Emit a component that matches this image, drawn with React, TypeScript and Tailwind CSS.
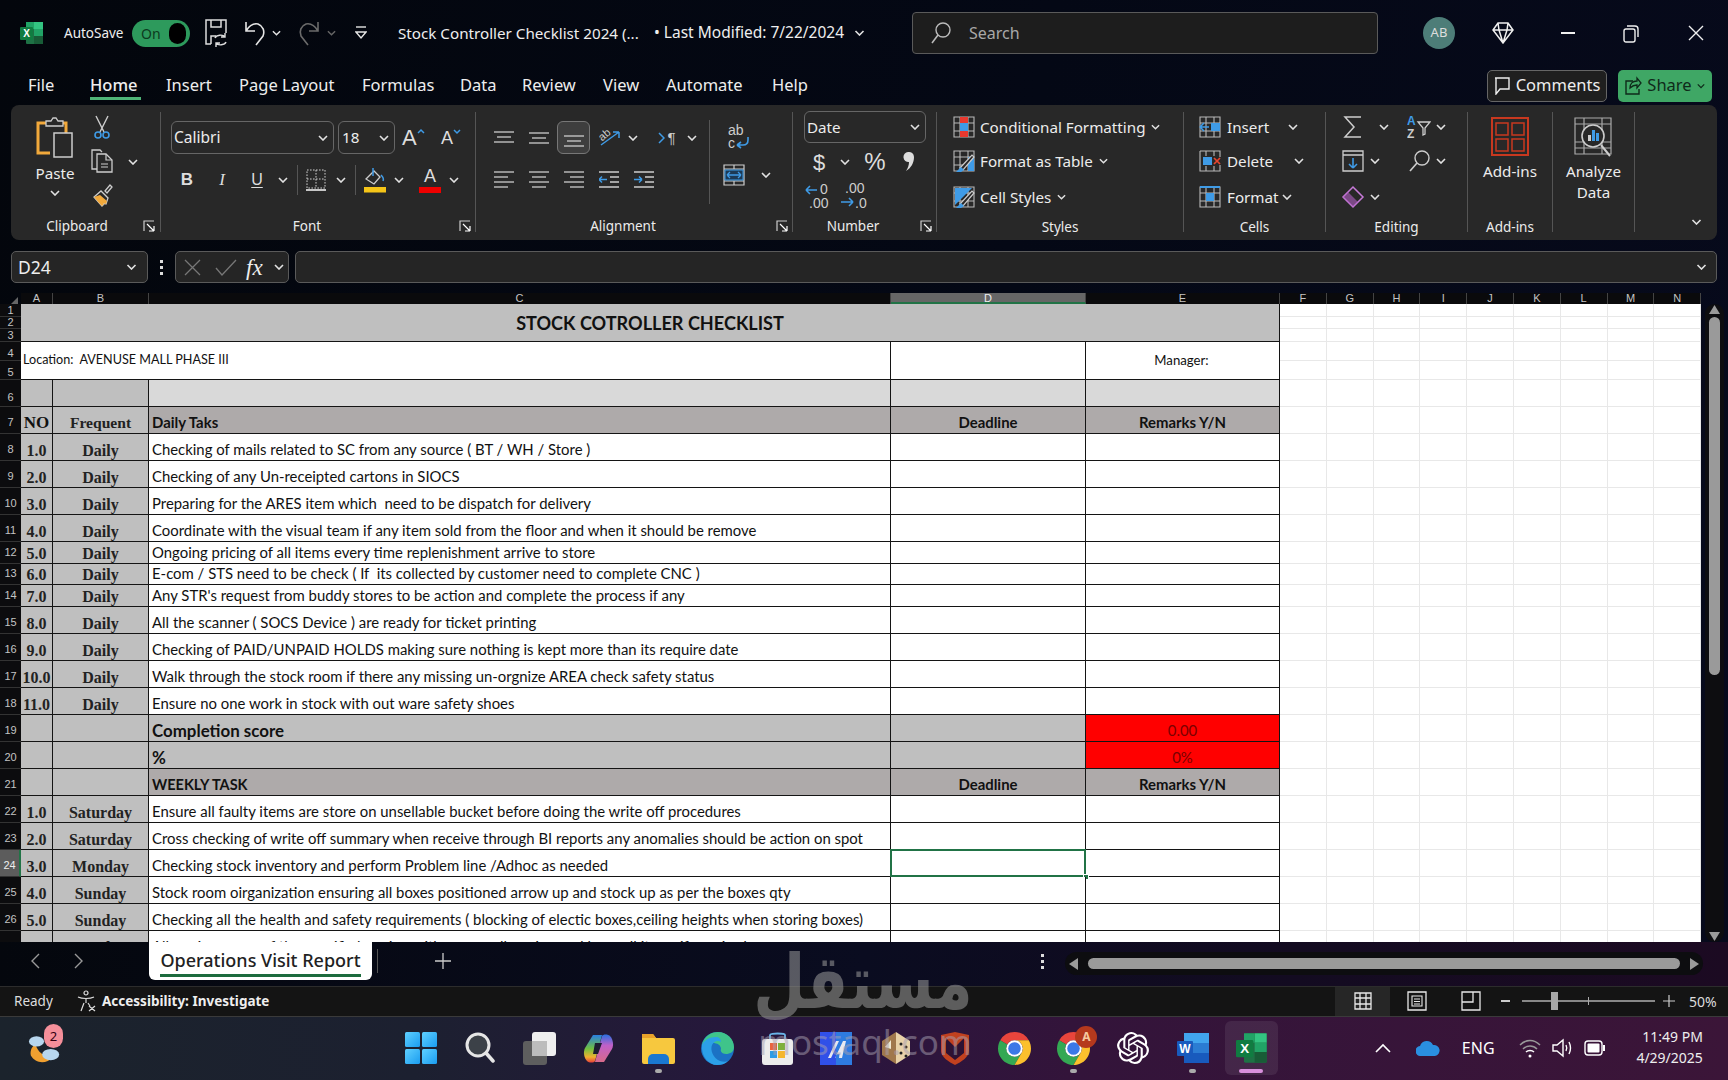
import React from "react";
import { SiOpenai } from "react-icons/si";

const L = "#cdcdcd";
const B = "#3f9be6";

// ─── tiny drawing helpers ────────────────────────────────────────────

function Chev({ c = "#e2e2e2", w = 10 }: { c?: string; w?: number }) {
  return (
    <svg width={w} height={6} viewBox="0 0 10 6" className="shrink-0">
      <path d="M1 1l4 4 4-4" fill="none" stroke={c} strokeWidth="1.6" />
    </svg>
  );
}

function Launcher() {
  return (
    <svg width={12} height={12} viewBox="0 0 12 12" className="shrink-0">
      <path d="M1 11V1h10" fill="none" stroke={L} strokeWidth="1.2" />
      <path d="M11 11V6M11 11H6M11 11L4 4" fill="none" stroke="#fff" strokeWidth="1.2" />
    </svg>
  );
}

function Lines({ rows, w = 20, h = 20 }: { rows: [number, number, number][]; w?: number; h?: number }) {
  return (
    <svg width={w} height={h} viewBox="0 0 20 20">
      {rows.map(([a, b, y], i) => (
        <path key={i} d={`M${a} ${y}H${b}`} stroke={L} strokeWidth="1.3" />
      ))}
    </svg>
  );
}

function Grid22({ children }: { children?: React.ReactNode }) {
  return (
    <svg width={22} height={22} viewBox="0 0 22 22" className="shrink-0">
      <path d="M1 1h20v20H1zM1 7h20M1 15h20M7 1v20M15 1v20" fill="none" stroke="#b8b8b8" strokeWidth="1.1" />
      {children}
    </svg>
  );
}

function XlLogo({ s = 24 }: { s?: number }) {
  return (
    <svg width={s} height={s} viewBox="0 0 24 24" className="shrink-0">
      <rect x="6" y="1" width="17" height="22" rx="1" fill="#1e7145" />
      <rect x="14" y="1" width="9" height="7" fill="#33c481" />
      <rect x="14" y="8" width="9" height="7" fill="#21a366" />
      <rect x="6" y="1" width="8" height="7" fill="#21a366" />
      <rect x="14" y="15" width="9" height="8" fill="#185c37" />
      <rect x="0" y="6" width="13" height="13" rx="1" fill="#107c41" />
      <text x="6.5" y="16" textAnchor="middle" fontSize="10" fontWeight="700" fill="#fff" fontFamily="Liberation Sans, sans-serif">X</text>
    </svg>
  );
}

function WordLogo() {
  return (
    <svg width={32} height={30} viewBox="0 0 32 30">
      <rect x="7" y="0" width="25" height="30" rx="1.5" fill="#2b7cd3" />
      <rect x="7" y="0" width="25" height="10" fill="#41a5ee" />
      <rect x="7" y="20" width="25" height="10" fill="#185abd" />
      <rect x="0" y="8" width="16" height="15" rx="1" fill="#185abd" />
      <text x="8" y="20" textAnchor="middle" fontSize="12" fontWeight="700" fill="#fff" fontFamily="Liberation Sans, sans-serif">W</text>
    </svg>
  );
}

function ChromeLogo() {
  return (
    <svg width={33} height={33} viewBox="4 4 40 40">
      <path d="M24 4A20 20 0 0 1 41.32 14H24A10 10 0 0 0 15.34 19L6.68 14A20 20 0 0 1 24 4Z" fill="#e8453c" />
      <path d="M6.68 14A20 20 0 0 0 24 44L32.66 29A10 10 0 0 1 15.34 19Z" fill="#34a853" />
      <path d="M41.32 14H24A10 10 0 0 1 32.66 29L24 44A20 20 0 0 0 41.32 14Z" fill="#fbc02d" />
      <circle cx="24" cy="24" r="10" fill="#fff" />
      <circle cx="24" cy="24" r="7.6" fill="#3b78e7" />
    </svg>
  );
}

// ─── sheet data ──────────────────────────────────────────────────────

const daily: [number, string, string, string, string][] = [
  [8, "1.0", "Daily", "Checking of mails related to SC from any source ( BT / WH / Store )", ""],
  [9, "2.0", "Daily", "Checking of any Un-receipted cartons in SIOCS", ""],
  [10, "3.0", "Daily", "Preparing for the ARES item which  need to be dispatch for delivery", ""],
  [11, "4.0", "Daily", "Coordinate with the visual team if any item sold from the floor and when it should be remove", ""],
  [12, "5.0", "Daily", "Ongoing pricing of all items every time replenishment arrive to store", ""],
  [13, "6.0", "Daily", "E-com / STS need to be check ( If  its collected by customer need to complete CNC )", ""],
  [14, "7.0", "Daily", "Any STR's request from buddy stores to be action and complete the process if any", ""],
  [15, "8.0", "Daily", "All the scanner ( SOCS Device ) are ready for ticket printing", ""],
  [16, "9.0", "Daily", "Checking of PAID/UNPAID HOLDS making sure nothing is kept more than its require date", ""],
  [17, "10.0", "Daily", "Walk through the stock room if there any missing un-orgnize AREA check safety status", ""],
  [18, "11.0", "Daily", "Ensure no one work in stock with out ware safety shoes", ""],
];

const weekly: [number, string, string, string, string][] = [
  [22, "1.0", "Saturday", "Ensure all faulty items are store on unsellable bucket before doing the write off procedures", ""],
  [23, "2.0", "Saturday", "Cross checking of write off summary when receive through BI reports any anomalies should be action on spot", ""],
  [24, "3.0", "Monday", "Checking stock inventory and perform Problem line /Adhoc as needed", "sel"],
  [25, "4.0", "Sunday", "Stock room oirganization ensuring all boxes positioned arrow up and stock up as per the boxes qty", ""],
  [26, "5.0", "Sunday", "Checking all the health and safety requirements ( blocking of electic boxes,ceiling heights when storing boxes)", ""],
  [27, "6.0", "Sunday", "Allocating space of the specific location with proper allocation and keep all items if required", ""],
];

const blanks = [0, 1, 2, 3, 4, 5, 6, 7, 8];

function Blanks() {
  return (
    <>
      {blanks.map((i) => (
        <div key={i} className="bg-white border-r border-b border-[#e8e8e8]" />
      ))}
    </>
  );
}

function RowNo({ n, active }: { n: number; active?: boolean }) {
  const pad = n <= 3 ? "pb-0" : n <= 5 ? "pb-[1px]" : n === 6 ? "pb-[3px]" : "pb-[5px]";
  return (
    <div className={`flex items-end justify-center ${pad} border-b border-[#333] text-[11px] leading-[11px] overflow-hidden font-['Liberation_Sans',sans-serif] ` + (active ? "bg-[#5c5c5c] text-[#eee] border-r-2 border-r-[#217346]" : "bg-[#0c0c0e] text-[#c4c4c4]")}>
      {n}
    </div>
  );
}

const serifA = "font-['Liberation_Serif',serif] font-bold text-[16px] leading-[19px] text-[#222]";
const serifB = "font-['Liberation_Serif',serif] font-bold text-[16px] leading-[19px] text-[#222]";
const cal = "font-['Lato',sans-serif] text-[#111]";
const cellLine = "border-b border-r border-[#141414]";

function TaskRow({ r }: { r: [number, string, string, string, string] }) {
  return (
    <>
      <RowNo n={r[0]} active={r[4] === "sel"} />
      <div className={`${cellLine} bg-[#bfbfbf] flex items-end justify-center ${serifA}`}>{r[1]}</div>
      <div className={`${cellLine} bg-[#bfbfbf] flex items-end justify-center ${serifB}`}>{r[2]}</div>
      <div className={`${cellLine} bg-white flex items-end pl-[3px] whitespace-pre overflow-hidden text-[14.9px] leading-[21px] ${cal}`}>{r[3]}</div>
      <div className={`${cellLine} bg-white relative`}>
        {r[4] === "sel" && (
          <>
            <div className="absolute -left-px -top-px -right-px -bottom-px border-2 border-[#217346]" />
            <div className="absolute -right-[4px] -bottom-[4px] w-[6px] h-[6px] bg-[#217346] border border-white" />
          </>
        )}
      </div>
      <div className={`${cellLine} bg-white`} />
      <Blanks />
    </>
  );
}

function GrayRow({ n, label, bold, fill, d, e, red }: { n: number; label: string; bold: string; fill: string; d?: string; e?: string; red?: boolean }) {
  return (
    <>
      <RowNo n={n} />
      <div className={`${cellLine} bg-[#bfbfbf]`} />
      <div className={`${cellLine} bg-[#bfbfbf]`} />
      <div className={`${cellLine} ${fill} flex items-end pl-[3px] leading-[21px] ${cal} ${bold}`}>{label}</div>
      <div className={`${cellLine} ${fill} flex items-end justify-center leading-[21px] font-bold text-[14.9px] ${cal}`}>{d}</div>
      <div className={`${cellLine} ${red ? "bg-[#ff0000] text-[#7a0000] font-normal" : fill + " font-bold text-[#111]"} flex items-end justify-center leading-[21px] text-[14.9px] font-['Lato',sans-serif]`}>{e}</div>
      <Blanks />
    </>
  );
}

function Sheet() {
  return (
    <div className="relative w-[1702px] h-[638px] overflow-hidden grid grid-cols-[21px_32px_96px_742px_195px_194px_repeat(9,46.8px)] grid-rows-[12.67px_12.67px_12.66px_19px_19px_27px_27px_27px_27px_27px_27px_22px_21.5px_21.5px_27px_27px_27px_27px_27px_27px_27px_27px_27px_27px_27px_27px_27px]">
      <RowNo n={1} />
      <div className="col-span-5 row-span-3 bg-[#bfbfbf] border-b border-r border-[#141414] flex items-center justify-center font-['Lato',sans-serif] font-bold text-[18.1px] text-[#111] pt-[2px]">STOCK COTROLLER CHECKLIST</div>
      <Blanks />
      <RowNo n={2} />
      <Blanks />
      <RowNo n={3} />
      <Blanks />

      <RowNo n={4} />
      <div className={`col-span-3 row-span-2 border-b border-r border-[#141414] bg-white flex items-center pl-[2px] whitespace-pre text-[12.6px] ${cal}`}>Location:  AVENUSE MALL PHASE III</div>
      <div className={`row-span-2 bg-white ${cellLine}`} />
      <div className={`row-span-2 bg-white ${cellLine} flex items-center justify-center pr-[2px] text-[13.2px] ${cal}`}>Manager:</div>
      <Blanks />
      <RowNo n={5} />
      <Blanks />

      <RowNo n={6} />
      <div className={`${cellLine} bg-[#bfbfbf]`} />
      <div className={`${cellLine} bg-[#bfbfbf]`} />
      <div className={`${cellLine} bg-[#d9d9d9]`} />
      <div className={`${cellLine} bg-[#d9d9d9]`} />
      <div className={`${cellLine} bg-[#d9d9d9]`} />
      <Blanks />

      <RowNo n={7} />
      <div className={`${cellLine} bg-[#bfbfbf] flex items-end justify-center font-['Liberation_Serif',serif] font-bold text-[17px] leading-[20px] text-[#111]`}>NO</div>
      <div className={`${cellLine} bg-[#bfbfbf] flex items-end justify-center font-['Liberation_Serif',serif] font-bold text-[15.6px] leading-[20px] text-[#222]`}>Frequent</div>
      <div className={`${cellLine} bg-[#aeaaaa] flex items-end pl-[3px] leading-[21px] font-bold text-[14.9px] ${cal}`}>Daily Taks</div>
      <div className={`${cellLine} bg-[#aeaaaa] flex items-end justify-center leading-[21px] font-bold text-[14.9px] ${cal}`}>Deadline</div>
      <div className={`${cellLine} bg-[#aeaaaa] flex items-end justify-center leading-[21px] font-bold text-[14.9px] ${cal}`}>Remarks Y/N</div>
      <Blanks />

      {daily.map((r) => (
        <TaskRow key={r[0]} r={r} />
      ))}

      <GrayRow n={19} label="Completion score" bold="font-bold text-[16.9px]" fill="bg-[#bfbfbf]" e="0.00" red />
      <GrayRow n={20} label="%" bold="font-bold text-[16.9px]" fill="bg-[#bfbfbf]" e="0%" red />
      <GrayRow n={21} label="WEEKLY TASK" bold="font-bold text-[14.5px]" fill="bg-[#aeaaaa]" d="Deadline" e="Remarks Y/N" />

      {weekly.map((r) => (
        <TaskRow key={r[0]} r={r} />
      ))}
    </div>
  );
}

// ─── ribbon pieces ───────────────────────────────────────────────────

function Sep() {
  return <div className="w-px h-[120px] mt-[7px] bg-[#555] shrink-0" />;
}

function StyleRow({ icon, label, mt }: { icon: React.ReactNode; label: string; mt: string }) {
  return (
    <div className={`flex items-center h-[28px] ml-[16px] ${mt}`}>
      {icon}
      <span className="ml-[5px] mr-[6px] whitespace-nowrap">{label}</span>
      <Chev w={9} />
    </div>
  );
}

function CellRow({ icon, label, w, mt }: { icon: React.ReactNode; label: string; w: string; mt: string }) {
  return (
    <div className={`flex items-center h-[28px] ml-[15px] ${mt}`}>
      {icon}
      <span className={`ml-[6px] whitespace-nowrap ${w}`}>{label}</span>
      <Chev />
    </div>
  );
}

function Ribbon() {
  return (
    <div className="mx-[11px] h-[135px] rounded-[8px] bg-[#282828] flex text-[#ececec] font-['Noto_Sans',sans-serif] text-[15.2px]">
      {/* Clipboard */}
      <div className="w-[149px] shrink-0 flex flex-col">
        <div className="h-[111px] flex">
          <div className="ml-[14px] w-[60px] pt-[12px] flex flex-col items-center">
            <svg width={38} height={41} viewBox="0 0 38 41" className="shrink-0">
              <path d="M12 6H2v30h12" fill="none" stroke="#f2a93b" strokeWidth="3" />
              <path d="M26 6h4v10" fill="none" stroke="#f2a93b" strokeWidth="3" />
              <path d="M10 9V4h5l2-3h3l2 3h5v5z" fill="#282828" stroke={L} strokeWidth="1.3" />
              <rect x="18" y="16" width="18" height="24" fill="#282828" stroke={L} strokeWidth="1.5" />
            </svg>
            <span className="mt-[4px] h-[22px] leading-[22px]">Paste</span>
            <span className="mt-[6px] leading-none flex"><Chev /></span>
          </div>
          <div className="ml-[5px] w-[24px] pt-[10px] flex flex-col items-center gap-[10px]">
            <svg width={20} height={24} viewBox="0 0 20 24">
              <path d="M4 1l8 16M16 1L8 17" stroke={L} strokeWidth="1.4" fill="none" />
              <circle cx="6" cy="20" r="3" fill="none" stroke={B} strokeWidth="1.6" />
              <circle cx="14" cy="20" r="3" fill="none" stroke={B} strokeWidth="1.6" />
            </svg>
            <svg width={22} height={24} viewBox="0 0 22 24">
              <path d="M6 20H1V1h8l2 2" fill="none" stroke={L} strokeWidth="1.3" />
              <path d="M6 5h9l6 6v12H6z" fill="#282828" stroke={L} strokeWidth="1.3" />
              <path d="M15 5v6h6M10 15h7M10 18h7" fill="none" stroke={L} strokeWidth="1.2" />
            </svg>
            <svg width={22} height={24} viewBox="0 0 22 24">
              <path d="M3 14l8 9 2-2-1-1 3 1 2-6-7-7z" fill="none" stroke={L} strokeWidth="1.3" />
              <path d="M3 14l5 6 3 3 2-2-1-1 3 1 1-3-7-6z" fill="#f2a93b" />
              <path d="M14 8l5-6 2 2-5 6z" fill="none" stroke={L} strokeWidth="1.3" />
            </svg>
          </div>
          <div className="ml-[14px] pt-[54px]"><Chev /></div>
        </div>
        <div className="h-[20px] flex items-center text-[13.5px]">
          <span className="w-[132px] text-center">Clipboard</span>
          <Launcher />
        </div>
      </div>
      <Sep />

      {/* Font */}
      <div className="w-[314px] shrink-0 flex flex-col">
        <div className="h-[111px] pt-[16px]">
          <div className="flex items-center h-[33px]">
            <div className="ml-[10px] w-[163px] h-[33px] rounded-[6px] border border-[#666] flex items-center justify-between pl-[2px] pr-[5px] text-[15.5px]">
              <span>Calibri</span>
              <Chev />
            </div>
            <div className="ml-[4px] w-[57px] h-[33px] rounded-[6px] border border-[#666] flex items-center justify-between pl-[3px] pr-[5px]">
              <span>18</span>
              <Chev />
            </div>
            <div className="ml-[7px] w-[24px] flex items-start">
              <span className="text-[22px] leading-none font-['Liberation_Sans',sans-serif] text-[#ddd]">A</span>
              <svg width={8} height={6} viewBox="0 0 8 6" className="shrink-0 mt-[1px]"><path d="M1 5l3-3 3 3" fill="none" stroke={B} strokeWidth="1.5" /></svg>
            </div>
            <div className="ml-[15px] w-[20px] flex items-start">
              <span className="text-[18px] leading-none font-['Liberation_Sans',sans-serif] text-[#ddd]">A</span>
              <svg width={8} height={6} viewBox="0 0 8 6" className="shrink-0"><path d="M1 1l3 3 3-3" fill="none" stroke={B} strokeWidth="1.5" /></svg>
            </div>
          </div>
          <div className="flex items-center h-[24px] mt-[14px] font-['Liberation_Sans',sans-serif]">
            <span className="ml-[16px] w-[20px] text-center font-bold text-[17px] text-[#ddd]">B</span>
            <span className="ml-[15px] w-[20px] text-center italic font-['Liberation_Serif',serif] text-[17px] text-[#ddd]">I</span>
            <span className="ml-[15px] w-[20px] text-center underline underline-offset-2 text-[16px] text-[#ddd]">U</span>
            <span className="ml-[11px] flex"><Chev /></span>
            <div className="ml-[9px] w-px h-[30px] bg-[#555]" />
            <span className="ml-[6px] flex">
              <svg width={24} height={24} viewBox="0 0 24 24">
                <path d="M3 2h18v18H3zM12 2v18M3 11h18" fill="none" stroke={L} strokeWidth="1" strokeDasharray="1.6 1.4" />
                <path d="M2 22h20" stroke="#eee" strokeWidth="1.6" />
              </svg>
            </span>
            <span className="ml-[8px] flex"><Chev /></span>
            <div className="ml-[9px] w-px h-[30px] bg-[#555]" />
            <span className="ml-[7px] flex">
              <svg width={24} height={26} viewBox="0 0 24 26">
                <path d="M3 12l8-8 6 6-6 7z" fill="none" stroke={L} strokeWidth="1.3" />
                <path d="M10 1v8M18 8c2 2 3 4 2 6" fill="none" stroke={B} strokeWidth="1.5" />
                <rect x="1" y="20" width="22" height="5.5" fill="#f5c518" />
              </svg>
            </span>
            <span className="ml-[7px] flex"><Chev /></span>
            <span className="ml-[14px] w-[24px] flex flex-col items-center leading-none">
              <span className="text-[18px] text-[#ddd] h-[20px]">A</span>
              <span className="w-[22px] h-[5.5px] bg-[#ee0000]" />
            </span>
            <span className="ml-[7px] flex"><Chev /></span>
          </div>
        </div>
        <div className="h-[20px] flex items-center text-[13.5px]">
          <span className="w-[292px] text-center">Font</span>
          <span className="ml-[6px] flex"><Launcher /></span>
        </div>
      </div>
      <Sep />

      {/* Alignment */}
      <div className="w-[316px] shrink-0 flex flex-col">
        <div className="h-[111px] flex">
          <div className="w-[233px] pt-[16px] pl-[11px]">
            <div className="flex items-center h-[33px] gap-[2px]">
              <div className="w-[33px] h-[33px] flex items-center justify-center"><Lines rows={[[0, 20, 4], [3, 17, 9], [0, 20, 14]]} /></div>
              <div className="w-[33px] h-[33px] flex items-center justify-center"><Lines rows={[[0, 20, 5], [3, 17, 10], [0, 20, 15]]} /></div>
              <div className="w-[33px] h-[33px] rounded-[6px] border border-[#777] bg-[#3e3e3e] flex items-center justify-center"><Lines rows={[[0, 20, 8], [3, 17, 13], [0, 20, 18]]} /></div>
              <span className="ml-[6px] flex">
                <svg width={24} height={24} viewBox="0 0 24 24">
                  <path d="M3 16L21 3M21 3h-6M21 3v6" transform="translate(0 3)" fill="none" stroke={B} strokeWidth="1.5" />
                  <text x="1" y="13" fontSize="11" fill={L} transform="rotate(-40 6 10)" fontFamily="Liberation Sans, sans-serif">ab</text>
                </svg>
              </span>
              <span className="ml-[4px] flex"><Chev /></span>
              <span className="ml-[13px] w-[28px] flex items-center justify-center gap-[2px]">
                <svg width={7} height={12} viewBox="0 0 7 12"><path d="M1 1l5 5-5 5" fill="none" stroke={B} strokeWidth="1.5" /></svg>
                <span className="text-[15px] font-['Liberation_Sans',sans-serif] text-[#ccc] leading-none">¶</span>
              </span>
              <span className="ml-[4px] flex"><Chev /></span>
            </div>
            <div className="flex items-center h-[24px] mt-[14px] gap-[2px]">
              <div className="w-[33px] flex justify-center"><Lines rows={[[0, 20, 2], [0, 14, 7], [0, 20, 12], [0, 14, 17]]} /></div>
              <div className="w-[33px] flex justify-center"><Lines rows={[[0, 20, 2], [3, 17, 7], [0, 20, 12], [3, 17, 17]]} /></div>
              <div className="w-[33px] flex justify-center"><Lines rows={[[0, 20, 2], [6, 20, 7], [0, 20, 12], [6, 20, 17]]} /></div>
              <div className="w-[33px] flex justify-center">
                <svg width={20} height={20} viewBox="0 0 20 20">
                  <path d="M0 2h20M11 7h9M11 12h9M0 17h20" stroke={L} strokeWidth="1.3" />
                  <path d="M0 9.5h8M0 9.5l3-3M0 9.5l3 3" fill="none" stroke={B} strokeWidth="1.5" />
                </svg>
              </div>
              <div className="w-[33px] flex justify-center">
                <svg width={20} height={20} viewBox="0 0 20 20">
                  <path d="M0 2h20M11 7h9M11 12h9M0 17h20" stroke={L} strokeWidth="1.3" />
                  <path d="M0 9.5h8M8 9.5l-3-3M8 9.5l-3 3" fill="none" stroke={B} strokeWidth="1.5" />
                </svg>
              </div>
            </div>
          </div>
          <div className="w-px h-[84px] mt-[15px] bg-[#555]" />
          <div className="ml-[12px] pt-[18px] flex flex-col">
            <svg width={30} height={30} viewBox="0 0 30 30">
              <text x="6" y="12" fontSize="14" fill={L} fontFamily="Liberation Sans, sans-serif">ab</text>
              <text x="6" y="25" fontSize="14" fill={L} fontFamily="Liberation Sans, sans-serif">c</text>
              <path d="M26 14v3c0 4-2 5-5 5h-6M15 22l4-3M15 22l4 3" fill="none" stroke={B} strokeWidth="1.6" />
            </svg>
            <div className="mt-[11px] flex items-center ml-[1px]">
              <svg width={22} height={22} viewBox="0 0 22 22">
                <path d="M1 1h20v20H1zM1 5h20M1 17h20M11 1v4M11 17v4" fill="none" stroke={L} strokeWidth="1.2" />
                <rect x="2" y="6" width="18" height="10" fill="#1d3a55" stroke={B} strokeWidth="1" />
                <path d="M4 11h14M4 11l3-3M4 11l3 3M18 11l-3-3M18 11l-3 3" fill="none" stroke={B} strokeWidth="1.3" />
              </svg>
              <span className="ml-[16px] flex"><Chev /></span>
            </div>
          </div>
        </div>
        <div className="h-[20px] flex items-center text-[13.5px]">
          <span className="w-[294px] text-center">Alignment</span>
          <span className="ml-[6px] flex"><Launcher /></span>
        </div>
      </div>
      <Sep />

      {/* Number */}
      <div className="w-[143px] shrink-0 flex flex-col">
        <div className="h-[111px] pt-[6px]">
          <div className="ml-[11px] w-[122px] h-[32px] rounded-[6px] border border-[#666] flex items-center justify-between pl-[2px] pr-[5px]">
            <span>Date</span>
            <Chev />
          </div>
          <div className="flex items-center h-[24px] mt-[7px] text-[#ddd] font-['Liberation_Sans',sans-serif]">
            <span className="ml-[16px] w-[20px] text-center text-[22px]">$</span>
            <span className="ml-[11px] flex"><Chev /></span>
            <span className="ml-[11px] w-[28px] text-center text-[24px]">%</span>
            <span className="ml-[14px] flex">
              <svg width={16} height={22} viewBox="0 0 16 22">
                <path d="M5 1a5 5 0 0 1 6 5c0 6-3 11-8 14 2-3 3-6 3-9a5 5 0 0 1-1-10z" fill="#ddd" />
              </svg>
            </span>
          </div>
          <div className="flex items-center h-[24px] mt-[10px] font-['Liberation_Sans',sans-serif]">
            <span className="ml-[12px] flex">
              <svg width={28} height={30} viewBox="0 0 28 30">
                <path d="M1 9h11M1 9l4-4M1 9l4 4" fill="none" stroke={B} strokeWidth="1.6" />
                <text x="15" y="13" fontSize="14" fill={L} fontFamily="Liberation Sans, sans-serif">0</text>
                <text x="4" y="27" fontSize="14" fill={L} fontFamily="Liberation Sans, sans-serif">.00</text>
              </svg>
            </span>
            <span className="ml-[7px] flex">
              <svg width={28} height={30} viewBox="0 0 28 30">
                <text x="5" y="12" fontSize="14" fill={L} fontFamily="Liberation Sans, sans-serif">.00</text>
                <path d="M1 21h12M13 21l-4-4M13 21l-4 4" fill="none" stroke={B} strokeWidth="1.6" />
                <text x="15" y="27" fontSize="14" fill={L} fontFamily="Liberation Sans, sans-serif">.0</text>
              </svg>
            </span>
          </div>
        </div>
        <div className="h-[20px] flex items-center text-[13.5px]">
          <span className="w-[120px] text-center">Number</span>
          <span className="ml-[7px] flex"><Launcher /></span>
        </div>
      </div>
      <Sep />

      {/* Styles */}
      <div className="w-[246px] shrink-0 flex flex-col">
        <div className="h-[112px] pt-[8px]">
          <StyleRow
            mt=""
            label="Conditional Formatting"
            icon={
              <Grid22>
                <rect x="7" y="1" width="8" height="6" fill="#e8392f" />
                <rect x="7" y="7" width="8" height="8" fill={B} />
                <rect x="7" y="15" width="8" height="6" fill="#e8392f" />
              </Grid22>
            }
          />
          <StyleRow
            mt="mt-[6px]"
            label="Format as Table"
            icon={
              <Grid22>
                <path d="M15 7h6v14h-6z" fill={B} />
                <path d="M7 18L19 5l2 2L10 20z" fill="#282828" stroke={L} strokeWidth="1.2" />
                <path d="M3 22l5-5 3 3-3 2z" fill={B} />
              </Grid22>
            }
          />
          <StyleRow
            mt="mt-[8px]"
            label="Cell Styles"
            icon={
              <Grid22>
                <path d="M2 2h17L2 19z" fill={B} />
                <path d="M7 18L19 5l2 2L10 20z" fill="#282828" stroke={L} strokeWidth="1.2" />
                <path d="M3 22l5-5 3 3-3 2z" fill={B} />
              </Grid22>
            }
          />
        </div>
        <div className="h-[20px] flex items-center justify-center text-[13.5px]">Styles</div>
      </div>
      <Sep />

      {/* Cells */}
      <div className="w-[141px] shrink-0 flex flex-col">
        <div className="h-[112px] pt-[8px]">
          <CellRow
            mt=""
            label="Insert"
            w="w-[61px]"
            icon={
              <Grid22>
                <rect x="12" y="7" width="9" height="8" fill={B} />
                <path d="M10 11H1M1 11l4-4M1 11l4 4" fill="none" stroke={B} strokeWidth="1.6" />
              </Grid22>
            }
          />
          <CellRow
            mt="mt-[6px]"
            label="Delete"
            w="w-[67px]"
            icon={
              <svg width={22} height={22} viewBox="0 0 22 22" className="shrink-0">
                <path d="M1 1h20v6M1 1v20h20v-6M7 1v5M15 1v5M7 16v5M15 16v5" fill="none" stroke="#b8b8b8" strokeWidth="1.1" />
                <rect x="4" y="7" width="9" height="8" fill={B} />
                <path d="M15 8l6 6M21 8l-6 6" stroke="#e8452f" strokeWidth="1.7" />
              </svg>
            }
          />
          <CellRow
            mt="mt-[8px]"
            label="Format"
            w="w-[55px]"
            icon={
              <Grid22>
                <path d="M1 1h20" stroke={B} strokeWidth="2" />
                <rect x="7" y="7" width="8" height="8" fill={B} />
              </Grid22>
            }
          />
        </div>
        <div className="h-[20px] flex items-center justify-center text-[13.5px]">Cells</div>
      </div>
      <Sep />

      {/* Editing */}
      <div className="w-[141px] shrink-0 flex flex-col">
        <div className="h-[112px] pt-[8px]">
          <div className="flex items-center h-[28px] ml-[15px]">
            <svg width={24} height={24} viewBox="0 0 24 24">
              <path d="M20 2H4l9 10-9 10h16" fill="none" stroke={L} strokeWidth="1.5" />
            </svg>
            <span className="ml-[14px] flex"><Chev /></span>
            <span className="ml-[18px] flex">
              <svg width={24} height={26} viewBox="0 0 24 26">
                <text x="0" y="11" fontSize="12" fontWeight="700" fill={B} fontFamily="Liberation Sans, sans-serif">A</text>
                <text x="0" y="24" fontSize="12" fontWeight="700" fill={L} fontFamily="Liberation Sans, sans-serif">Z</text>
                <path d="M11 8h12l-5 6v6l-2 1v-7z" fill="none" stroke={L} strokeWidth="1.3" />
              </svg>
            </span>
            <span className="ml-[5px] flex"><Chev /></span>
          </div>
          <div className="flex items-center h-[28px] ml-[15px] mt-[6px]">
            <svg width={24} height={24} viewBox="0 0 24 24">
              <path d="M2 2h20v20H2zM2 6h20" fill="none" stroke={L} strokeWidth="1.3" />
              <path d="M12 9v10M12 19l-4-4M12 19l4-4" fill="none" stroke={B} strokeWidth="1.6" />
            </svg>
            <span className="ml-[5px] flex"><Chev /></span>
            <span className="ml-[27px] flex">
              <svg width={24} height={24} viewBox="0 0 24 24">
                <circle cx="15" cy="9" r="7" fill="none" stroke={L} strokeWidth="1.4" />
                <path d="M10 14l-7 8" stroke={L} strokeWidth="1.6" />
              </svg>
            </span>
            <span className="ml-[5px] flex"><Chev /></span>
          </div>
          <div className="flex items-center h-[28px] ml-[15px] mt-[8px]">
            <svg width={24} height={24} viewBox="0 0 24 24">
              <path d="M12 2l10 10-10 10L2 12z" fill="#282828" stroke="#c77ad8" strokeWidth="1.5" />
              <path d="M2 12l5-5 10 10-5 5z" fill="#b35fc4" fillOpacity=".6" />
            </svg>
            <span className="ml-[5px] flex"><Chev /></span>
          </div>
        </div>
        <div className="h-[20px] flex items-center justify-center text-[13.5px]">Editing</div>
      </div>
      <Sep />

      {/* Add-ins */}
      <div className="w-[84px] shrink-0 flex flex-col items-center">
        <div className="h-[112px] pt-[12px] flex flex-col items-center">
          <svg width={38} height={39} viewBox="0 0 38 39" className="shrink-0">
            <rect x="1" y="1" width="36" height="37" fill="none" stroke="#c8381f" strokeWidth="2" />
            <rect x="5" y="6" width="12" height="12" fill="none" stroke="#c8381f" strokeWidth="1.5" />
            <rect x="21" y="6" width="12" height="12" fill="none" stroke="#c8381f" strokeWidth="1.5" />
            <rect x="5" y="22" width="12" height="12" fill="none" stroke="#c8381f" strokeWidth="1.5" />
            <rect x="21" y="22" width="12" height="12" fill="none" stroke="#c8381f" strokeWidth="1.5" />
          </svg>
          <span className="mt-[4px]">Add-ins</span>
        </div>
        <div className="h-[20px] flex items-center text-[13.5px]">Add-ins</div>
      </div>
      <Sep />

      {/* Analyze */}
      <div className="w-[81px] shrink-0 flex flex-col items-center">
        <div className="h-[112px] pt-[12px] flex flex-col items-center">
          <svg width={38} height={40} viewBox="0 0 38 40" className="shrink-0">
            <path d="M1 1h36v36H1zM1 7h36M1 25h36M1 31h36M10 1v36M28 1v36" fill="none" stroke="#a9a9a9" strokeWidth="1.2" />
            <circle cx="19" cy="19" r="11" fill="#282828" stroke={L} strokeWidth="1.6" />
            <rect x="14" y="18" width="3" height="6" fill={L} />
            <rect x="18" y="13" width="3" height="11" fill={B} />
            <rect x="22" y="16" width="3" height="8" fill={B} />
            <path d="M27 28l9 11" stroke={L} strokeWidth="2" />
          </svg>
          <span className="mt-[4px] leading-[21px]">Analyze</span>
          <span className="leading-[21px]">Data</span>
        </div>
      </div>
      <Sep />
      <div className="flex-1 flex items-end justify-end pr-[14px] pb-[15px]"><Chev w={13} /></div>
    </div>
  );
}

// ─── top bars ────────────────────────────────────────────────────────

function TitleBar() {
  return (
    <div className="h-[66px] flex items-center pl-[20px] text-[#eee] font-['Noto_Sans',sans-serif]">
      <XlLogo />
      <span className="ml-[20px] w-[68px] text-[13.5px]">AutoSave</span>
      <div className="w-[58px] h-[27px] rounded-full bg-[#2d9a5c] flex items-center pl-[9px] text-[14px] text-[#0c3a20]">
        <span className="w-[28px]">On</span>
        <span className="w-[17px] h-[21px] rounded-full bg-black" />
      </div>
      <span className="ml-[15px] flex">
        <svg width={23} height={28} viewBox="0 0 23 28">
          <path d="M6 25H1V1h20v13M6 1v7h10V1M6 25v-8h5" fill="none" stroke="#ddd" strokeWidth="1.5" />
          <path d="M10 19c1-3 8-4 10-1M21 23c-1 3-8 4-10 1M20 14v4h-4M11 28v-4h4" fill="none" stroke="#ddd" strokeWidth="1.4" />
        </svg>
      </span>
      <span className="ml-[17px] flex">
        <svg width={21} height={26} viewBox="0 0 21 26">
          <path d="M1 2v9h9M1 11c3-5 7-8 12-7 5 2 7 7 5 12l-7 9" fill="none" stroke="#e5e5e5" strokeWidth="1.6" />
        </svg>
      </span>
      <span className="ml-[6px] flex"><Chev w={9} /></span>
      <span className="ml-[16px] flex">
        <svg width={23} height={26} viewBox="0 0 21 26">
          <path d="M20 2v9h-9M20 11c-3-5-7-8-12-7-5 2-7 7-5 12l7 9" fill="none" stroke="#6b6b6b" strokeWidth="1.6" />
        </svg>
      </span>
      <span className="ml-[7px] flex"><Chev c="#666" w={9} /></span>
      <span className="ml-[19px] flex">
        <svg width={12} height={14} viewBox="0 0 12 14">
          <path d="M1 1h10" stroke="#e5e5e5" strokeWidth="1.4" />
          <path d="M1 6h10L6 12z" fill="none" stroke="#e5e5e5" strokeWidth="1.4" />
        </svg>
      </span>
      <span className="ml-[31px] w-[256px] text-[15.2px] whitespace-nowrap">Stock Controller Checklist 2024 (...</span>
      <span className="text-[15.5px] whitespace-nowrap w-[200px]">• Last Modified: 7/22/2024</span>
      <Chev w={11} />
      <div className="ml-[47px] w-[466px] h-[42px] rounded-[4px] border border-[#5a5a5a] bg-[#1d1d1d] flex items-center pl-[17px] text-[16px] text-[#a8a8a8]">
        <svg width={22} height={24} viewBox="0 0 22 24">
          <circle cx="13" cy="9" r="7" fill="none" stroke="#bbb" strokeWidth="1.4" />
          <path d="M8 14l-6 8" stroke="#bbb" strokeWidth="1.5" />
        </svg>
        <span className="ml-[17px]">Search</span>
      </div>
      <div className="ml-[45px] w-[32px] h-[32px] rounded-full bg-[#4d7d78] flex items-center justify-center text-[13px] text-[#ddd]">AB</div>
      <span className="ml-[37px] flex">
        <svg width={22} height={22} viewBox="0 0 22 22">
          <path d="M6 1h10l5 7-10 13L1 8zM1 8h20M7 8l4 13 4-13M6 1l1 7M16 1l-1 7" fill="none" stroke="#f0f0f0" strokeWidth="1.5" />
        </svg>
      </span>
      <span className="ml-[47px] w-[14px] h-[2px] bg-[#f0f0f0]" />
      <span className="ml-[48px] flex">
        <svg width={16} height={20} viewBox="0 0 16 20">
          <path d="M4 3h8a3 3 0 0 1 3 3v8" fill="none" stroke="#f0f0f0" strokeWidth="1.4" />
          <rect x="1" y="6" width="11" height="13" rx="2" fill="none" stroke="#f0f0f0" strokeWidth="1.4" />
        </svg>
      </span>
      <span className="ml-[49px] flex">
        <svg width={16} height={16} viewBox="0 0 16 16">
          <path d="M1 1l14 14M15 1L1 15" stroke="#f0f0f0" strokeWidth="1.4" />
        </svg>
      </span>
    </div>
  );
}

function TabRow() {
  return (
    <div className="h-[39px] flex items-center pl-[28px] text-[16.5px] text-[#eee] font-['Noto_Sans',sans-serif]">
      <span className="w-[62px]">File</span>
      <span className="w-[76px] relative font-medium">
        Home
        <span className="absolute left-0 w-[51px] top-[24px] h-[3px] bg-[#4fb477]" />
      </span>
      <span className="w-[73px]">Insert</span>
      <span className="w-[123px]">Page Layout</span>
      <span className="w-[98px]">Formulas</span>
      <span className="w-[62px]">Data</span>
      <span className="w-[81px]">Review</span>
      <span className="w-[63px]">View</span>
      <span className="w-[106px]">Automate</span>
      <span className="w-[715px]">Help</span>
      <div className="w-[120px] h-[32px] rounded-[5px] border border-[#666] bg-[#1f1f1f] flex items-center justify-center gap-[6px]">
        <svg width={16} height={18} viewBox="0 0 16 18">
          <path d="M1 1h14v11H6l-4 5V1z" fill="none" stroke="#eee" strokeWidth="1.4" />
        </svg>
        Comments
      </div>
      <div className="ml-[11px] w-[94px] h-[32px] rounded-[5px] bg-[#3fa765] flex items-center justify-center gap-[5px] text-[#0f2a1a]">
        <svg width={17} height={19} viewBox="0 0 17 19">
          <path d="M8 5H1v13h13v-5" fill="none" stroke="#0f2a1a" strokeWidth="1.4" />
          <path d="M5 12c0-5 3-7 7-7V2l4 5-4 5V9c-3 0-5 1-7 3z" fill="none" stroke="#0f2a1a" strokeWidth="1.3" />
        </svg>
        Share
        <Chev c="#0f2a1a" w={8} />
      </div>
    </div>
  );
}

function FormulaBar() {
  return (
    <div className="mt-[11px] h-[32px] mx-[11px] flex items-center text-[#eee] font-['Noto_Sans',sans-serif]">
      <div className="w-[137px] h-full rounded-[5px] border border-[#5a5a5a] bg-[#252525] flex items-center justify-between pl-[6px] pr-[9px] text-[17.5px]">
        <span>D24</span>
        <Chev w={13} />
      </div>
      <div className="w-[27px] flex flex-col items-center gap-[3px]">
        <span className="w-[3px] h-[3px] bg-[#ddd]" />
        <span className="w-[3px] h-[3px] bg-[#ddd]" />
        <span className="w-[3px] h-[3px] bg-[#ddd]" />
      </div>
      <div className="w-[114px] h-full rounded-[5px] border border-[#5a5a5a] bg-[#252525] flex items-center pl-[8px]">
        <svg width={17} height={17} viewBox="0 0 17 17"><path d="M1 1l15 15M16 1L1 16" stroke="#777" strokeWidth="1.3" /></svg>
        <svg width={22} height={17} viewBox="0 0 22 17" className="ml-[14px]"><path d="M1 9l6 7L21 1" fill="none" stroke="#777" strokeWidth="1.3" /></svg>
        <span className="ml-[9px] w-[24px] text-[23px] italic font-['Liberation_Serif',serif] leading-none">fx</span>
        <span className="ml-[3px] flex"><Chev w={12} /></span>
      </div>
      <div className="ml-[6px] flex-1 h-full rounded-[5px] border border-[#5a5a5a] bg-[#252525] flex items-center justify-end pr-[8px]">
        <Chev w={13} />
      </div>
    </div>
  );
}

const colHeads: [string, string][] = [
  ["A", "w-[32px]"],
  ["B", "w-[96px]"],
  ["C", "w-[742px]"],
  ["D", "w-[195px]"],
  ["E", "w-[194px]"],
  ["F", "w-[46.8px]"],
  ["G", "w-[46.8px]"],
  ["H", "w-[46.8px]"],
  ["I", "w-[46.8px]"],
  ["J", "w-[46.8px]"],
  ["K", "w-[46.8px]"],
  ["L", "w-[46.8px]"],
  ["M", "w-[46.8px]"],
  ["N", "w-[46.8px]"],
];

function ColHeader() {
  return (
    <div className="mt-[10px] h-[11px] flex text-[11px] leading-[11px] text-[#c4c4c4] font-['Liberation_Sans',sans-serif]">
      <div className="w-[21px] flex items-end justify-end pr-[3px]">
        <svg width={7} height={7} viewBox="0 0 7 7"><path d="M7 0v7H0z" fill="#666" /></svg>
      </div>
      {colHeads.map(([c, w]) => (
        <div key={c} className={`${w} shrink-0 text-center border-r border-[#444] ${c === "D" ? "bg-[#666] text-[#eee] border-b-2 border-b-[#217346]" : "bg-[#0a0a0c]"}`}>{c}</div>
      ))}
    </div>
  );
}

function VScroll() {
  return (
    <div className="ml-[3px] w-[19px] h-[638px] rounded-full bg-[#0d0d10] flex flex-col items-center py-[1px]">
      <svg width={11} height={9} viewBox="0 0 11 9"><path d="M5.5 0L11 9H0z" fill="#9a9a9a" /></svg>
      <div className="mt-[3px] w-[11px] h-[358px] rounded-full bg-[#9a9a9a]" />
      <div className="flex-1" />
      <svg width={11} height={9} viewBox="0 0 11 9"><path d="M5.5 9L11 0H0z" fill="#9a9a9a" /></svg>
    </div>
  );
}

function SheetTabs() {
  return (
    <div className="h-[43.5px] flex items-start text-[#ddd]">
      <div className="w-[149px] h-[38px] flex items-center pl-[30px] gap-[34px]">
        <svg width={10} height={16} viewBox="0 0 10 16"><path d="M9 1L2 8l7 7" fill="none" stroke="#999" strokeWidth="1.4" /></svg>
        <svg width={10} height={16} viewBox="0 0 10 16"><path d="M1 1l7 7-7 7" fill="none" stroke="#999" strokeWidth="1.4" /></svg>
      </div>
      <div className="w-[223px] h-[38px] rounded-b-[6px] bg-white flex flex-col items-center justify-start pt-[5px] font-['Noto_Sans',sans-serif] text-[18px] font-medium text-[#222]">
        <span className="leading-[26px] whitespace-nowrap">Operations Visit Report</span>
        <span className="w-[201px] h-[2.5px] mt-[1px] bg-[#1d6b3e]" />
      </div>
      <div className="ml-[5px] mt-[7px] w-px h-[24px] bg-[#555]" />
      <svg width={16} height={16} viewBox="0 0 16 16" className="ml-[57px] mt-[11px]"><path d="M8 0v16M0 8h16" stroke="#ccc" strokeWidth="1.3" /></svg>
      <div className="ml-[590px] mt-[12px] flex flex-col gap-[3px] w-[4px]">
        <span className="w-[3px] h-[3px] bg-[#ddd]" />
        <span className="w-[3px] h-[3px] bg-[#ddd]" />
        <span className="w-[3px] h-[3px] bg-[#ddd]" />
      </div>
      <div className="ml-[20px] mt-[10px] w-[638px] h-[23px] rounded-full bg-[#0d0d10] flex items-center justify-between px-[4px]">
        <svg width={9} height={12} viewBox="0 0 9 12"><path d="M0 6l9-6v12z" fill="#9a9a9a" /></svg>
        <div className="w-[592px] h-[11px] rounded-full bg-[#9a9a9a]" />
        <svg width={9} height={12} viewBox="0 0 9 12"><path d="M9 6L0 0v12z" fill="#9a9a9a" /></svg>
      </div>
    </div>
  );
}

function StatusBar() {
  return (
    <div className="h-[30px] bg-[#141414] border-t border-[#2c2c2c] flex items-center text-[#ddd] font-['Noto_Sans',sans-serif] text-[13.5px]">
      <span className="ml-[14px] w-[63px]">Ready</span>
      <svg width={20} height={22} viewBox="0 0 20 22">
        <circle cx="9" cy="3" r="2" fill="none" stroke="#ddd" strokeWidth="1.2" />
        <path d="M1 7c4 2 12 2 16 0M9 8v5M7 13l-3 8M11 13l2 3M12 16l6 5M18 16l-6 5" fill="none" stroke="#ddd" strokeWidth="1.2" />
      </svg>
      <span className="ml-[5px] w-[1233px] font-bold text-[#eee]">Accessibility: Investigate</span>
      <div className="w-[55px] h-full bg-[#262626] flex items-center justify-center">
        <svg width={18} height={18} viewBox="0 0 18 18"><path d="M1 1h16v16H1zM1 6h16M1 12h16M6 1v16M12 1v16" fill="none" stroke="#e8e8e8" strokeWidth="1.3" /></svg>
      </div>
      <span className="ml-[17px] flex">
        <svg width={20} height={20} viewBox="0 0 20 20"><path d="M1 1h18v18H1z" fill="none" stroke="#e8e8e8" strokeWidth="1.3" /><path d="M5 5h10v10H5zM7 8h6M7 10.5h6M7 13h6" fill="none" stroke="#e8e8e8" strokeWidth="1.1" /></svg>
      </span>
      <span className="ml-[34px] flex">
        <svg width={20} height={20} viewBox="0 0 20 20"><path d="M1 1h18v18H1zM1 11h11V1" fill="none" stroke="#e8e8e8" strokeWidth="1.3" /></svg>
      </span>
      <span className="ml-[20px] w-[9px] h-[1.5px] bg-[#ccc]" />
      <div className="ml-[12px] w-[133px] h-[16px] flex items-center relative">
        <div className="w-full h-[2px] bg-[#888]" />
        <span className="absolute left-[29px] top-[-1px] w-[7px] h-[18px] bg-[#a8a8a8]" />
        <span className="absolute left-[66px] top-[4px] w-px h-[8px] bg-[#aaa]" />
      </div>
      <svg width={12} height={12} viewBox="0 0 12 12" className="ml-[8px]"><path d="M6 0v12M0 6h12" stroke="#ccc" strokeWidth="1.2" /></svg>
      <span className="ml-[14px] text-[14px]">50%</span>
    </div>
  );
}

function TaskIcon({ children, dot, on }: { children: React.ReactNode; dot?: boolean; on?: boolean }) {
  return (
    <div className="relative w-[59.4px] h-full flex items-center justify-center">
      {on && <span className="absolute left-[3px] top-[4px] w-[53px] h-[54px] rounded-[6px] bg-[#ffffff14]" />}
      <span className="relative flex">{children}</span>
      {dot && <span className="absolute left-[26px] bottom-[7px] w-[7px] h-[4px] rounded-full bg-[#aaa]" />}
      {on && <span className="absolute left-[17px] bottom-[7px] w-[24px] h-[4px] rounded-full bg-[#d88fdc]" />}
    </div>
  );
}

function TaskBar() {
  return (
    <div className="h-[64.5px] bg-[linear-gradient(90deg,#1b232c_0%,#1c2030_24%,#28163e_46%,#33143a_62%,#3b1538_100%)] border-t border-[#3a3a3a] flex items-center text-white font-['Noto_Sans',sans-serif]">
      <div className="w-[391px] h-full flex items-center pl-[28px]">
        <div className="relative flex">
          <svg width={34} height={34} viewBox="0 0 36 36">
            <path d="M8 14c2 8 8 13 18 14-6 7-18 7-23-2-1-5 1-10 5-12z" fill="#f0a030" />
            <ellipse cx="9" cy="11" rx="8" ry="5.5" fill="#b7d6ee" />
            <ellipse cx="24" cy="25" rx="9" ry="6" fill="#b7d6ee" />
          </svg>
          <span className="absolute left-[16px] -top-[7px] w-[19px] h-[24px] rounded-full bg-[#f58f9a] text-[#301] text-[13px] flex items-center justify-center">2</span>
        </div>
      </div>
      <div className="flex h-full items-center">
        <TaskIcon>
          <svg width={32} height={32} viewBox="0 0 32 32">
            <defs>
              <linearGradient id="win" x1="0" y1="0" x2="1" y2="1"><stop offset="0" stopColor="#5fd0ff" /><stop offset="1" stopColor="#1a9cf0" /></linearGradient>
            </defs>
            <rect x="0" y="0" width="15" height="15" rx="1.5" fill="url(#win)" />
            <rect x="17" y="0" width="15" height="15" rx="1.5" fill="url(#win)" />
            <rect x="0" y="17" width="15" height="15" rx="1.5" fill="url(#win)" />
            <rect x="17" y="17" width="15" height="15" rx="1.5" fill="url(#win)" />
          </svg>
        </TaskIcon>
        <TaskIcon>
          <svg width={30} height={32} viewBox="0 0 30 32">
            <circle cx="13" cy="13" r="11" fill="#3c4148" stroke="#e6e6e6" strokeWidth="3" />
            <path d="M21 21l7 8" stroke="#e6e6e6" strokeWidth="3.5" strokeLinecap="round" />
          </svg>
        </TaskIcon>
        <TaskIcon>
          <svg width={33} height={33} viewBox="0 0 33 33">
            <rect x="0" y="9" width="24" height="24" rx="3" fill="#5e5e5e" />
            <rect x="9" y="0" width="24" height="24" rx="3" fill="#efefef" />
            <rect x="9" y="9" width="15" height="15" fill="#bcbcbc" />
          </svg>
        </TaskIcon>
        <TaskIcon>
          <svg width={31} height={31} viewBox="0 0 31 31">
            <defs>
              <linearGradient id="cp" x1="0" y1="0" x2="0" y2="1"><stop offset="0" stopColor="#2a7fe0" /><stop offset=".5" stopColor="#70c040" /><stop offset=".8" stopColor="#f0b030" /><stop offset="1" stopColor="#e8403a" /></linearGradient>
              <linearGradient id="cp2" x1="0" y1="0" x2="0" y2="1"><stop offset="0" stopColor="#2a6fe0" /><stop offset=".4" stopColor="#c060c8" /><stop offset="1" stopColor="#d86a8a" /></linearGradient>
            </defs>
            <path d="M10 2h9L12 28c-1 2-6 2-8 0-3-3-4-9-2-13z" fill="url(#cp)" />
            <path d="M21 29h-9l7-26c1-2 6-2 8 0 3 3 4 9 2 13z" fill="url(#cp2)" />
            <path d="M12 10h7l-4 11H10z" fill="#1c1e30" />
          </svg>
        </TaskIcon>
        <TaskIcon dot>
          <svg width={33} height={31} viewBox="0 0 33 31">
            <path d="M0 3a2 2 0 0 1 2-2h9l3 4h17a2 2 0 0 1 2 2v22a2 2 0 0 1-2 2H2a2 2 0 0 1-2-2z" fill="#f7c83e" />
            <path d="M0 1h11l3 4H0z" fill="#e8a22a" />
            <path d="M6 31v-5a5 5 0 0 1 5-5h11a5 5 0 0 1 5 5v5z" fill="#1a78d0" />
          </svg>
        </TaskIcon>
        <TaskIcon>
          <svg width={33} height={33} viewBox="0 0 33 33">
            <circle cx="16.5" cy="16.5" r="16.5" fill="#1b72c4" />
            <path d="M1 13C3 4 10 0 17 0c9 0 16 7 16 15 0 5-4 7-8 7-4 0-6-3-5-5 0-4-4-6-8-6-5 0-10 2-11 2z" fill="#3fc48a" />
            <path d="M1 13c2-4 6-8 14-8 3 0 5 2 5 5-3-2-7-1-9 3-2 5 1 13 8 16 3 1 6 1 8 0-3 3-7 4-11 4C8 33 0 25 1 13z" fill="#2ca0e8" />
          </svg>
        </TaskIcon>
        <TaskIcon>
          <svg width={33} height={33} viewBox="0 0 33 33">
            <path d="M9 8V3c0-2 15-2 15 0v5" fill="none" stroke="#6ab4e8" strokeWidth="1.8" />
            <rect x="1" y="7" width="31" height="26" rx="3" fill="#ececec" />
            <rect x="9" y="11" width="7" height="7" fill="#e8643c" />
            <rect x="17" y="11" width="7" height="7" fill="#7fb03a" />
            <rect x="9" y="19" width="7" height="7" fill="#2f9be8" />
            <rect x="17" y="19" width="7" height="7" fill="#f4b62c" />
          </svg>
        </TaskIcon>
        <TaskIcon>
          <svg width={32} height={33} viewBox="0 0 32 33">
            <rect width="32" height="33" fill="#3050e8" />
            <rect x="16" width="16" height="33" fill="#2e7be0" />
            <path d="M8 26L16 9h3l-8 17zM15 26L23 9h3l-4 17h-3l.5-4h-3l-1 4z" fill="#e8e8f0" />
          </svg>
        </TaskIcon>
        <TaskIcon>
          <svg width={32} height={34} viewBox="0 0 32 34">
            <path d="M2 10L16 1v32L2 24z" fill="#a0784c" />
            <path d="M16 1l14 9v14l-14 9z" fill="#e8d2a8" />
            <path d="M5 16l6-7v9z" fill="#f2e8d0" />
            <circle cx="21" cy="13" r="1.5" fill="#222" />
            <circle cx="26" cy="16" r="1.5" fill="#222" />
            <circle cx="21" cy="22" r="1.5" fill="#222" />
            <circle cx="26" cy="25" r="1.5" fill="#222" />
          </svg>
        </TaskIcon>
        <TaskIcon>
          <svg width={30} height={33} viewBox="0 0 30 33">
            <path d="M1 3l14-3 14 3v16c0 6-8 11-14 14C9 30 1 25 1 19z" fill="#c1411f" />
            <path d="M6 6v15l9 7 9-7V6l-9 9z" fill="#2e1233" />
          </svg>
        </TaskIcon>
        <TaskIcon><ChromeLogo /></TaskIcon>
        <TaskIcon dot>
          <span className="relative flex">
            <ChromeLogo />
            <span className="absolute left-[18px] -top-[6px] w-[22px] h-[22px] rounded-full bg-[#b5391d] text-[#f5c9a0] text-[12px] font-bold flex items-center justify-center">A</span>
          </span>
        </TaskIcon>
        <TaskIcon><SiOpenai size={32} color="#fff" /></TaskIcon>
        <TaskIcon dot><WordLogo /></TaskIcon>
        <TaskIcon on><XlLogo s={32} /></TaskIcon>
      </div>
      <svg width={16} height={10} viewBox="0 0 16 10" className="ml-[93px]"><path d="M1 9l7-7 7 7" fill="none" stroke="#fff" strokeWidth="1.6" /></svg>
      <svg width={24} height={16} viewBox="0 0 24 16" className="ml-[25px]"><path d="M5 16a5 5 0 0 1-1-10 7 7 0 0 1 13-1 5.5 5.5 0 0 1 2 11z" fill="#2a8fe0" /></svg>
      <span className="ml-[22px] w-[37px] text-[16px] whitespace-nowrap">ENG</span>
      <svg width={22} height={20} viewBox="0 0 22 20" className="ml-[20px]">
        <path d="M1 7c6-6 14-6 20 0M4 11c4-4 10-4 14 0" fill="none" stroke="#999" strokeWidth="1.5" />
        <path d="M7 14c2-2 6-2 8 0" fill="none" stroke="#fff" strokeWidth="1.5" />
        <circle cx="11" cy="18" r="1.5" fill="#fff" />
      </svg>
      <svg width={22} height={22} viewBox="0 0 22 22" className="ml-[11px]">
        <path d="M1 8v6h4l6 5V3L5 8z" fill="none" stroke="#fff" strokeWidth="1.4" />
        <path d="M14 8c1 2 1 4 0 6M17 5c2 4 2 8 0 12" fill="none" stroke="#fff" strokeWidth="1.4" />
      </svg>
      <svg width={22} height={16} viewBox="0 0 22 16" className="ml-[10px]">
        <rect x="1" y="1" width="17" height="14" rx="3" fill="none" stroke="#fff" strokeWidth="1.4" />
        <rect x="3.5" y="3.5" width="12" height="9" rx="1" fill="#fff" />
        <rect x="19" y="5" width="2" height="6" fill="#fff" />
      </svg>
      <div className="ml-[21px] mb-[3px] w-[76px] flex flex-col items-end text-[14px] leading-[21px] text-[#eee] whitespace-nowrap">
        <span>11:49 PM</span>
        <span>4/29/2025</span>
      </div>
    </div>
  );
}

export default function App() {
  return (
    <div className="relative w-[1728px] h-[1080px] overflow-hidden bg-[linear-gradient(100deg,#03060c_0%,#040815_55%,#070a1c_100%)]">
      <TitleBar />
      <TabRow />
      <Ribbon />
      <FormulaBar />
      <ColHeader />
      <div className="flex">
        <Sheet />
        <VScroll />
      </div>
      <div className="bg-[linear-gradient(90deg,#04070d_0%,#0a0c20_50%,#1c0a22_100%)]">
        <SheetTabs />
      </div>
      <StatusBar />
      <TaskBar />

      {/* site watermark lying over the window */}
      <div className="absolute left-[743px] top-[946px] w-[240px] text-center text-[60px] leading-[72px] font-bold text-[#9a9a9a] opacity-55 scale-y-125 font-['DejaVu_Sans',sans-serif] pointer-events-none">مستقل</div>
      <div className="absolute left-[745px] top-[1020px] w-[240px] text-center text-[35px] leading-[44px] text-[#a8a0b0] opacity-50 font-['Noto_Sans',sans-serif] pointer-events-none">mostaql.com</div>
    </div>
  );
}
